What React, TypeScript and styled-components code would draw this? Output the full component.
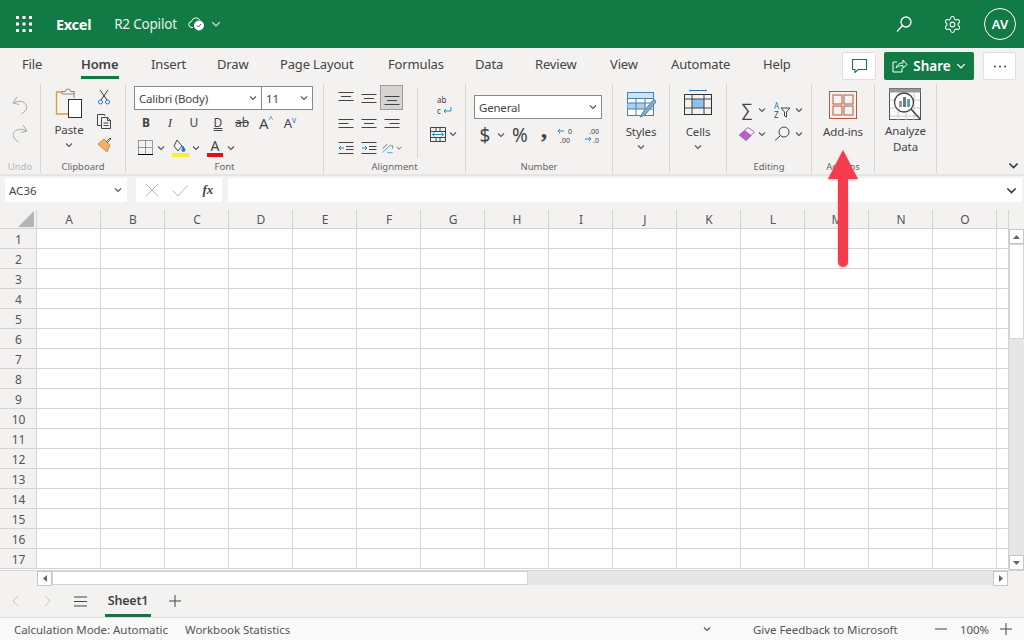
import React from "react";
import styled, { createGlobalStyle } from "styled-components";
import { Settings } from "lucide-react";

const GlobalStyle = createGlobalStyle`
  html, body { margin: 0; padding: 0; background: #fff; }
  * { box-sizing: border-box; }
  body { font-family: "Noto Sans", "Open Sans", sans-serif; color: #333; }
`;

const Page = styled.div`
  position: relative;
  width: 1024px;
  height: 640px;
  overflow: hidden;
  display: flex;
  flex-direction: column;
  background: #f3f2f1;
`;

/* top green bar */
const TopBar = styled.header`
  height: 48px;
  flex: none;
  background: #117a45;
  color: #fff;
  display: flex;
  align-items: center;
  padding: 0 8px 0 16px;
`;
const AppName = styled.span`
  margin-left: 24px;
  font-size: 14.5px;
  font-weight: 700;
  letter-spacing: -0.3px;
`;
const DocName = styled.span`
  margin-left: 23px;
  font-size: 13.5px;
  letter-spacing: -0.2px;
  color: #e6f2ec;
`;
const TopRight = styled.div`
  margin-left: auto;
  display: flex;
  align-items: center;
`;
const TopIcon = styled.div<{ $mr: number; $ml?: number }>`
  display: flex;
  margin-left: ${(p) => p.$ml ?? 0}px;
  margin-right: ${(p) => p.$mr}px;
`;
const Avatar = styled.div`
  width: 32px;
  height: 32px;
  border: 1px solid #fff;
  border-radius: 50%;
  display: flex;
  align-items: center;
  justify-content: center;
  font-size: 13px;
  font-weight: 600;
`;

/* tabs */
const TabRow = styled.nav`
  height: 32px;
  flex: none;
  display: flex;
  align-items: center;
  padding-left: 22px;
`;
const Tab = styled.div<{ $w: number; $active?: boolean }>`
  position: relative;
  width: ${(p) => p.$w}px;
  height: 32px;
  line-height: 32px;
  font-size: 13px;
  white-space: nowrap;
  letter-spacing: -0.15px;
  color: #444;
  font-weight: ${(p) => (p.$active ? 600 : 400)};
  &::after {
    content: "";
    display: ${(p) => (p.$active ? "block" : "none")};
    position: absolute;
    left: 0;
    width: 38px;
    bottom: 1px;
    height: 3px;
    background: #117a45;
  }
`;
const TabActions = styled.div`
  margin-left: auto;
  padding-right: 8px;
  display: flex;
  align-items: center;
  gap: 8px;
  margin-top: 4px;
`;
const WhiteButton = styled.div<{ $w: number }>`
  width: ${(p) => p.$w}px;
  height: 28px;
  background: #fff;
  border: 1px solid #e1dfdd;
  border-radius: 2px;
  display: flex;
  align-items: center;
  justify-content: center;
`;
const ShareButton = styled.div`
  width: 90px;
  height: 28px;
  margin-right: 1px;
  background: #117a45;
  border-radius: 2px;
  color: #fff;
  font-size: 13.5px;
  font-weight: 600;
  display: flex;
  align-items: center;
  justify-content: center;
  gap: 5px;
`;

/* ribbon */
const Ribbon = styled.section`
  height: 96px;
  flex: none;
  display: flex;
  padding: 4px 0 1px;
  border-bottom: 2px solid #e6e5e4;
`;
const Group = styled.div<{ $w: number }>`
  width: ${(p) => p.$w}px;
  flex: none;
  display: flex;
  flex-direction: column;
  border-right: 1px solid #d8d6d4;
`;
const GroupBody = styled.div<{ $pad?: number }>`
  flex: 1;
  min-height: 0;
  display: flex;
  padding-left: ${(p) => p.$pad ?? 0}px;
`;
const GroupLabel = styled.div<{ $muted?: boolean }>`
  height: 12px;
  line-height: 12px;
  text-align: center;
  font-size: 9.5px;
  color: ${(p) => (p.$muted ? "#b5b5b5" : "#666")};
`;
const Stack = styled.div<{ $w?: number; $gap?: number; $top?: number }>`
  display: flex;
  flex-direction: column;
  align-items: center;
  width: ${(p) => (p.$w ? `${p.$w}px` : "auto")};
  gap: ${(p) => p.$gap ?? 0}px;
  padding-top: ${(p) => p.$top ?? 0}px;
  & > * {
    flex: none;
  }
`;
const BigLabel = styled.div<{ $mt?: number }>`
  margin-top: ${(p) => p.$mt ?? 0}px;
  font-size: 11.5px;
  line-height: 16px;
  color: #444;
  text-align: center;
  letter-spacing: -0.1px;
`;
const ChevSlot = styled.div`
  display: flex;
  margin-top: 3px;
`;
const Row = styled.div<{ $h?: number; $mt?: number }>`
  display: flex;
  align-items: center;
  align-self: flex-start;
  height: ${(p) => p.$h ?? 24}px;
  margin-top: ${(p) => p.$mt ?? 0}px;
`;
const CenterRow = styled(Row)`
  align-self: center;
`;
const Cell = styled.div<{ $w: number; $ml?: number; $column?: boolean }>`
  width: ${(p) => p.$w}px;
  margin-left: ${(p) => p.$ml ?? 0}px;
  height: 100%;
  display: flex;
  flex-direction: ${(p) => (p.$column ? "column" : "row")};
  align-items: center;
  justify-content: center;
  color: #333;
`;
const Glyph = styled.span<{
  $size?: number;
  $bold?: boolean;
  $italic?: boolean;
  $under?: "single" | "double";
  $strike?: boolean;
  $serif?: boolean;
  $lift?: number;
  $blue?: boolean;
  $tight?: boolean;
}>`
  font-size: ${(p) => p.$size ?? 12}px;
  font-weight: ${(p) => (p.$bold ? 700 : 400)};
  font-style: ${(p) => (p.$italic ? "italic" : "normal")};
  font-family: ${(p) => (p.$serif ? '"Liberation Serif", serif' : "inherit")};
  text-decoration: ${(p) => (p.$under ? `underline ${p.$under}` : p.$strike ? "line-through" : "none")};
  margin-bottom: ${(p) => p.$lift ?? 0}px;
  line-height: ${(p) => (p.$tight ? "14px" : "normal")};
  color: ${(p) => (p.$blue ? "#2a78b8" : "#444")};
`;
const Combo = styled.div<{ $w: number }>`
  width: ${(p) => p.$w}px;
  height: 24px;
  align-self: flex-start;
  background: #fff;
  border: 1px solid #8a8886;
  display: flex;
  align-items: center;
  font-size: 11.5px;
  letter-spacing: -0.2px;
  color: #444;
`;
const ComboPart = styled.div<{ $w: number; $divide?: boolean }>`
  width: ${(p) => p.$w}px;
  height: 100%;
  display: flex;
  align-items: center;
  justify-content: space-between;
  padding: 0 4px 0 4px;
  border-right: ${(p) => (p.$divide ? "1px solid #8a8886" : "none")};
`;
const AlignGrid = styled.div`
  display: grid;
  grid-template-columns: repeat(3, 23px);
  grid-auto-rows: 25px;
  margin-top: 1px;
  height: 75px;
`;
const AlignCell = styled.div<{ $on?: boolean }>`
  display: flex;
  align-items: center;
  justify-content: center;
  background: ${(p) => (p.$on ? "#d6d5d4" : "transparent")};
  border: 1px solid ${(p) => (p.$on ? "#9c9b9a" : "transparent")};
`;
const InnerRule = styled.div`
  width: 1px;
  height: 70px;
  margin: 4px 7px 0 14px;
  background: #d8d6d4;
`;
const RibbonEnd = styled.div`
  flex: 1;
  display: flex;
  align-items: flex-end;
  justify-content: flex-end;
  padding: 0 5px 2px 0;
`;

/* formula bar */
const FormulaBar = styled.div`
  height: 34px;
  flex: none;
  display: flex;
  padding: 2px 2px 8px 5px;
`;
const NameBox = styled.div`
  width: 122px;
  background: #fff;
  display: flex;
  align-items: center;
  justify-content: space-between;
  padding: 0 5px 0 4px;
  font-size: 11.5px;
  color: #444;
`;
const FxBox = styled.div`
  width: 86px;
  margin-left: 9px;
  background: #fff;
  display: flex;
  align-items: center;
  justify-content: space-around;
  padding: 0 2px;
`;
const FormulaInput = styled.div`
  flex: 1;
  margin-left: 6px;
  background: #fff;
  display: flex;
  align-items: center;
  justify-content: flex-end;
  padding-right: 5px;
`;

/* sheet */
const SheetArea = styled.div`
  height: 360px;
  flex: none;
  display: flex;
`;
const SheetGrid = styled.div`
  width: 1009px;
  flex: none;
  display: grid;
  grid-template-columns: 37px repeat(15, 64px) 12px;
  grid-template-rows: 19px repeat(17, 20px);
  background: #fff;
`;
const HeadCell = styled.div`
  background: #f3f2f1;
  border-right: 1px solid #d4d4d4;
  border-bottom: 1px solid #d4d4d4;
  display: flex;
  align-items: center;
  justify-content: center;
  padding: 1px 0 0 1px;
  font-size: 12px;
  color: #555;
`;
const Corner = styled(HeadCell)`
  justify-content: flex-end;
  align-items: flex-end;
  padding: 0 2px 1px 0;
`;
const DataCell = styled.div`
  border-right: 1px solid #d4d4d4;
  border-bottom: 1px solid #d4d4d4;
`;
const VScroll = styled.div`
  width: 15px;
  flex: none;
  display: flex;
  flex-direction: column;
  padding-top: 19px;
  background: #e6e6e6;
  box-shadow: inset 0 19px 0 #f3f2f1;
`;
const ScrollButton = styled.div`
  width: 15px;
  height: 15px;
  flex: none;
  background: #fff;
  border: 1px solid #c8c6c4;
  display: flex;
  align-items: center;
  justify-content: center;
`;
const VThumb = styled.div`
  height: 95px;
  flex: none;
  background: #fff;
  border: 1px solid #d4d4d4;
`;
const ScrollGap = styled.div`
  flex: 1;
`;
const HScrollRow = styled.div`
  height: 15px;
  flex: none;
  display: flex;
  padding-left: 37px;
  border-top: 1px solid #d4d4d4;
`;
const HTrack = styled.div`
  width: 941px;
  flex: none;
  background: #e6e6e6;
`;
const HThumb = styled.div`
  width: 476px;
  height: 100%;
  background: #fff;
  border: 1px solid #d4d4d4;
`;
const SheetBar = styled.div`
  height: 32px;
  flex: none;
  display: flex;
  align-items: center;
  font-size: 13px;
`;
const SheetTab = styled.div`
  position: relative;
  width: 46px;
  margin-left: 18px;
  height: 32px;
  line-height: 31px;
  text-align: center;
  font-weight: 600;
  font-size: 12.5px;
  letter-spacing: -0.2px;
  color: #444;
  white-space: nowrap;
  &::after {
    content: "";
    position: absolute;
    left: 0;
    right: 0;
    bottom: 0;
    height: 3px;
    background: #1f6e43;
  }
`;
const SheetIcon = styled.div<{ $w: number; $ml?: number }>`
  width: ${(p) => p.$w}px;
  margin-left: ${(p) => p.$ml ?? 0}px;
  display: flex;
  justify-content: center;
`;
const StatusBar = styled.footer`
  height: 23px;
  flex: none;
  background: #f9f9f9;
  border-top: 1px solid #e1dfdd;
  display: flex;
  align-items: center;
  font-size: 11.5px;
  letter-spacing: -0.05px;
  color: #555;
  padding-left: 14px;
`;
const StatusText = styled.span<{ $w: number; $ml?: number }>`
  width: ${(p) => p.$w}px;
  margin-left: ${(p) => p.$ml ?? 0}px;
  flex: none;
  white-space: nowrap;
`;

/* red annotation arrow drawn over the ribbon */
const Annotation = styled.svg`
  position: absolute;
  left: 823px;
  top: 148px;
  filter: drop-shadow(0 1px 1px rgba(0, 0, 0, 0.25));
`;

const Chev = ({ c = "#555", s = 8 }: { c?: string; s?: number }) => (
  <svg width={s} height={s} viewBox="0 0 8 8" fill="none" stroke={c} strokeWidth="1.1">
    <path d="M1 2.5 4 5.5 7 2.5" />
  </svg>
);
const Ico = ({ w, h, children, sw = 1, stroke = "#444" }: { w: number; h: number; children: React.ReactNode; sw?: number; stroke?: string }) => (
  <svg width={w} height={h} viewBox={`0 0 ${w} ${h}`} fill="none" stroke={stroke} strokeWidth={sw}>
    {children}
  </svg>
);
const TextLines = ({ y, align }: { y: "t" | "m" | "b"; align: "l" | "c" | "r" }) => {
  const y0 = y === "t" ? 2 : y === "m" ? 4 : 6;
  return (
    <Ico w={16} h={16}>
      {[0, 4, 8].map((d, i) => {
        const len = i === 1 ? 10 : 15;
        const x = align === "l" ? 0.5 : align === "c" ? (16 - len) / 2 : 15.5 - len;
        return <path key={d} d={`M${x} ${y0 + d + 0.5}h${len}`} />;
      })}
    </Ico>
  );
};
const Indent = ({ out }: { out?: boolean }) => (
  <Ico w={16} h={14}>
    <path d="M0.5 1.5h15M8 5.5h7.5M8 8.5h7.5M0.5 12.5h15" />
    <path d={out ? "M6 7H1M3 5 1 7l2 2" : "M1 7h5M4 5l2 2-2 2"} stroke="#1f8fc0" />
  </Ico>
);

const columns = "ABCDEFGHIJKLMNO".split("");
const rows = Array.from({ length: 17 }, (_, i) => i + 1);
const tabs: [string, number][] = [
  ["File", 59], ["Home", 70], ["Insert", 66], ["Draw", 63], ["Page Layout", 108], ["Formulas", 87],
  ["Data", 60], ["Review", 75], ["View", 61], ["Automate", 92], ["Help", 40],
];

export default function App() {
  return (
    <>
      <GlobalStyle />
      <Page>
        <TopBar>
          <svg width="16" height="16" viewBox="0 0 16 16" fill="#fff">
            {[1.5, 8, 14.5].flatMap((y) => [1.5, 8, 14.5].map((x) => <rect key={`${x}-${y}`} x={x - 1.5} y={y - 1.5} width="3" height="3" />))}
          </svg>
          <AppName>Excel</AppName>
          <DocName>R2 Copilot</DocName>
          <TopIcon $ml={11} $mr={6}>
            <svg width="17" height="14" viewBox="0 0 17 14" fill="none" stroke="#fff" strokeWidth="1">
              <path d="M5 10.5H4a3 3 0 0 1-.5-6A4.5 4.5 0 0 1 12 3.5" />
              <circle cx="11" cy="8.5" r="4.5" fill="#fff" />
              <path d="M9 8.5l1.5 1.5 2.5-3" stroke="#117a45" />
            </svg>
          </TopIcon>
          <Chev c="#cfe5d9" s={10} />
          <TopRight>
            <TopIcon $mr={31}>
              <svg width="16" height="17" viewBox="0 0 16 17" fill="none" stroke="#fff" strokeWidth="1.3">
                <circle cx="10" cy="6" r="5" />
                <path d="M6.5 9.5 1 15.5" />
              </svg>
            </TopIcon>
            <TopIcon $mr={22}>
              <Settings size={19} strokeWidth={1.3} color="#fff" />
            </TopIcon>
            <Avatar>AV</Avatar>
          </TopRight>
        </TopBar>

        <TabRow>
          {tabs.map(([t, w]) => (
            <Tab key={t} $w={w} $active={t === "Home"}>{t}</Tab>
          ))}
          <TabActions>
            <WhiteButton $w={34}>
              <svg width="15" height="14" viewBox="0 0 15 14" fill="none" stroke="#117a45" strokeWidth="1.1">
                <path d="M0.5 0.5h14v10H6l-3 3v-3H0.5z" />
              </svg>
            </WhiteButton>
            <ShareButton>
              <svg width="16" height="14" viewBox="0 0 16 14" fill="none" stroke="#fff" strokeWidth="1">
                <path d="M5 3H1v10h9V9M4 9c1-4 4-5 7-5V1l4 4.5L11 9V6.5C8 6.5 6 7 4 9z" />
              </svg>
              Share
              <Chev c="#fff" s={10} />
            </ShareButton>
            <WhiteButton $w={33}>
              <svg width="14" height="3" viewBox="0 0 14 3" fill="#444">
                <circle cx="2" cy="1.5" r="1" /><circle cx="7" cy="1.5" r="1" /><circle cx="12" cy="1.5" r="1" />
              </svg>
            </WhiteButton>
          </TabActions>
        </TabRow>

        <Ribbon>
          <Group $w={41}>
            <GroupBody>
              <Stack $w={40} $gap={9} $top={12}>
                <Ico w={18} h={19} stroke="#a8a8a8">
                  <path d="M6 1 2 7l6 1.5M2.5 7C7 4 14 5 15.5 9.5 16.5 13 14 15.5 10.5 18" />
                </Ico>
                <Ico w={18} h={19} stroke="#a8a8a8">
                  <path d="M12 1l4 6-6 1.5M15.5 7C11 4 4 5 2.5 9.5 1.5 13 4 15.5 7.5 18" />
                </Ico>
              </Stack>
            </GroupBody>
            <GroupLabel $muted>Undo</GroupLabel>
          </Group>

          <Group $w={85}>
            <GroupBody $pad={13}>
              <Stack $w={30} $top={4}>
                <Ico w={28} h={31}>
                  <path d="M7 4H1.5v22H13" stroke="#d99a4e" strokeWidth="1.4" />
                  <path d="M7 4h12v6" stroke="#d99a4e" strokeWidth="1.4" />
                  <path d="M7 6V3.5h3.5a2.5 2.5 0 0 1 5 0H19V6z" fill="#f3f2f1" stroke="#888" />
                  <rect x="13.5" y="11.5" width="13" height="18" fill="#fff" stroke="#333" />
                </Ico>
                <BigLabel $mt={3}>Paste</BigLabel>
                <ChevSlot><Chev /></ChevSlot>
              </Stack>
              <Stack $w={40} $gap={8} $top={5}>
                <Ico w={14} h={16}>
                  <path d="M3 1l7 10M11 1 4 11" stroke="#333" />
                  <circle cx="3.5" cy="13" r="2" stroke="#2a78b8" />
                  <circle cx="10.5" cy="13" r="2" stroke="#2a78b8" />
                </Ico>
                <Ico w={16} h={16}>
                  <path d="M5 12.5H1.5V1.5h7L9 3" />
                  <path d="M5.5 4.5h6l3 3v8h-9zM11.5 4.5v3h3M7.5 10h5M7.5 12.5h5" fill="#f3f2f1" />
                </Ico>
                <Ico w={16} h={16}>
                  <path d="M8 2 14 8l-3 7-9-8z" fill="#f0b070" stroke="#d98a3c" />
                  <path d="M10 5l4-4 1 1-4 4" stroke="#555" />
                </Ico>
              </Stack>
            </GroupBody>
            <GroupLabel>Clipboard</GroupLabel>
          </Group>

          <Group $w={198}>
            <GroupBody $pad={8}>
              <Stack $top={2}>
                <Combo $w={179}>
                  <ComboPart $w={127} $divide>Calibri (Body) <Chev /></ComboPart>
                  <ComboPart $w={50}>11 <Chev /></ComboPart>
                </Combo>
                <Row $h={23} $mt={1}>
                  <Cell $w={24}><Glyph $bold>B</Glyph></Cell>
                  <Cell $w={24}><Glyph $italic $serif $size={13}>I</Glyph></Cell>
                  <Cell $w={24}><Glyph $under="single">U</Glyph></Cell>
                  <Cell $w={24}><Glyph $under="double">D</Glyph></Cell>
                  <Cell $w={24}><Glyph $strike>ab</Glyph></Cell>
                  <Cell $w={24}><Glyph $size={15}>A</Glyph><Glyph $size={8} $blue $lift={8}>^</Glyph></Cell>
                  <Cell $w={24}><Glyph $size={13}>A</Glyph><Glyph $size={8} $blue $lift={6}>v</Glyph></Cell>
                </Row>
                <Row $h={25} $mt={1}>
                  <Cell $w={22}>
                    <Ico w={15} h={15}>
                      <path d="M.5.5h14M.5.5v14M14.5.5v14M7.5.5v14M.5 7.5h14" strokeDasharray="1 1" />
                      <path d="M0 14.5h15" stroke="#000" />
                    </Ico>
                  </Cell>
                  <Cell $w={10}><Chev /></Cell>
                  <Cell $w={22} $ml={3}>
                    <Ico w={17} h={18}>
                      <path d="M5 1l5 6-4 5-4-5z" />
                      <path d="M11 7c1 2 2 3 2 4a1.2 1.2 0 0 1-3 0c0-1 .5-2 1-4z" fill="#2a78b8" stroke="#2a78b8" />
                      <rect x="0" y="14" width="17" height="4" fill="#f7ee3b" stroke="none" />
                    </Ico>
                  </Cell>
                  <Cell $w={10}><Chev /></Cell>
                  <Cell $w={22} $ml={3} $column>
                    <Glyph $size={14} $tight>A</Glyph>
                    <svg width="16" height="4" viewBox="0 0 16 4"><rect width="16" height="4" fill="#e0101a" /></svg>
                  </Cell>
                  <Cell $w={10}><Chev /></Cell>
                </Row>
              </Stack>
            </GroupBody>
            <GroupLabel>Font</GroupLabel>
          </Group>

          <Group $w={142}>
            <GroupBody $pad={10}>
              <AlignGrid>
                <AlignCell><TextLines y="t" align="c" /></AlignCell>
                <AlignCell><TextLines y="m" align="c" /></AlignCell>
                <AlignCell $on><TextLines y="b" align="c" /></AlignCell>
                <AlignCell><TextLines y="m" align="l" /></AlignCell>
                <AlignCell><TextLines y="m" align="c" /></AlignCell>
                <AlignCell><TextLines y="m" align="r" /></AlignCell>
                <AlignCell><Indent out /></AlignCell>
                <AlignCell><Indent /></AlignCell>
                <AlignCell>
                  <Ico w={19} h={16}>
                    <path d="M2 14 11 5M8 14h7M15 5l-4 0M15 5v4" stroke="#1f8fc0" />
                    <path d="M2 9 8 3" />
                  </Ico>
                  <Chev />
                </AlignCell>
              </AlignGrid>
              <InnerRule />
              <Stack $w={38} $gap={9} $top={9}>
                <Ico w={18} h={24}>
                  <text x="2" y="10" fontSize="8" fill="#444" stroke="none">ab</text>
                  <text x="2" y="21" fontSize="8" fill="#444" stroke="none">c</text>
                  <path d="M16 14v4H9M11 16l-2 2 2 2" stroke="#1f8fc0" />
                </Ico>
                <CenterRow $h={16}>
                  <Ico w={16} h={15}>
                    <path d="M.5.5h15v14H.5zM.5 4.5h15M.5 10.5h15M6 .5v4M10 .5v4M6 10.5v4M10 10.5v4" />
                    <path d="M2.5 7.5h11M4.5 5.5l-2 2 2 2M11.5 5.5l2 2-2 2" stroke="#1f8fc0" />
                  </Ico>
                  <Cell $w={11} $ml={2}><Chev /></Cell>
                </CenterRow>
              </Stack>
            </GroupBody>
            <GroupLabel>Alignment</GroupLabel>
          </Group>

          <Group $w={147}>
            <GroupBody $pad={8}>
              <Stack $top={11}>
                <Combo $w={128}>
                  <ComboPart $w={126}>General <Chev /></ComboPart>
                </Combo>
                <Row $h={32}>
                  <Cell $w={22}><Glyph $size={19}>$</Glyph></Cell>
                  <Cell $w={10}><Chev /></Cell>
                  <Cell $w={26} $ml={1}><Glyph $size={19}>%</Glyph></Cell>
                  <Cell $w={22}><Glyph $size={26} $bold $serif $tight $lift={11}>,</Glyph></Cell>
                  <Cell $w={24}>
                    <Ico w={20} h={18}>
                      <path d="M7 5H1M3 3 1 5l2 2" stroke="#1f8fc0" />
                      <text x="11" y="8" fontSize="7" fill="#444" stroke="none">0</text>
                      <text x="3" y="17" fontSize="7" fill="#444" stroke="none">.00</text>
                    </Ico>
                  </Cell>
                  <Cell $w={30}>
                    <Ico w={20} h={18}>
                      <text x="5" y="8" fontSize="7" fill="#444" stroke="none">.00</text>
                      <path d="M1 13h6M5 11l2 2-2 2" stroke="#1f8fc0" />
                      <text x="9" y="17" fontSize="7" fill="#444" stroke="none">.0</text>
                    </Ico>
                  </Cell>
                </Row>
              </Stack>
            </GroupBody>
            <GroupLabel>Number</GroupLabel>
          </Group>

          <Group $w={57}>
            <GroupBody>
              <Stack $w={56} $top={8}>
                <Ico w={30} h={27}>
                  <rect x="1.5" y=".5" width="26" height="23" fill="#fff" stroke="#4a7fa8" />
                  <rect x="1.5" y=".5" width="26" height="6" fill="#cfe3f2" stroke="#4a7fa8" />
                  <rect x="1.5" y="11" width="18" height="6" fill="#a9d0ee" stroke="none" />
                  <path d="M1.5 11h26M1.5 17h26M10 6.5v17M19 6.5v17" stroke="#4a7fa8" />
                  <path d="M28 7 17 20l-3 5 5-2L30 10z" fill="#6fb1de" stroke="#77818a" />
                </Ico>
                <BigLabel $mt={5}>Styles</BigLabel>
                <ChevSlot><Chev /></ChevSlot>
              </Stack>
            </GroupBody>
            <GroupLabel />
          </Group>

          <Group $w={57}>
            <GroupBody>
              <Stack $w={56} $top={5}>
                <Ico w={28} h={28}>
                  <path d="M6 1.5h16M6 .5v2M22 .5v2" stroke="#2a78b8" />
                  <rect x="8" y="10" width="12" height="9" fill="#8cc2f0" stroke="none" />
                  <rect x=".5" y="5.5" width="27" height="20" stroke="#333" />
                  <path d="M.5 10h27M.5 19h27M8 5.5v20M20 5.5v20" stroke="#444" />
                </Ico>
                <BigLabel $mt={7}>Cells</BigLabel>
                <ChevSlot><Chev /></ChevSlot>
              </Stack>
            </GroupBody>
            <GroupLabel />
          </Group>

          <Group $w={85}>
            <GroupBody $pad={12}>
              <Stack $top={14} $gap={1}>
                <Row $h={23}>
                  <Cell $w={16}><Glyph $size={17}>∑</Glyph></Cell>
                  <Cell $w={14}><Chev /></Cell>
                  <Cell $w={24} $ml={1}>
                    <Ico w={17} h={18}>
                      <text x="0" y="8" fontSize="8" fill="#2a78b8" stroke="none">A</text>
                      <text x="0" y="17" fontSize="8" fill="#444" stroke="none">Z</text>
                      <path d="M7 7h9l-3.5 4v5l-2-1v-4z" />
                    </Ico>
                  </Cell>
                  <Cell $w={10}><Chev /></Cell>
                </Row>
                <Row $h={23}>
                  <Cell $w={16}>
                    <Ico w={16} h={14} stroke="#b05fc6">
                      <path d="M9 .5 15.5 5 7 13.5 .5 8z" fill="#f3f2f1" />
                      <path d="M5.5 3.5 12 8.5 7 13.5 .5 8z" fill="#b565c9" />
                    </Ico>
                  </Cell>
                  <Cell $w={14}><Chev /></Cell>
                  <Cell $w={24} $ml={1}>
                    <Ico w={16} h={15}>
                      <circle cx="10" cy="6" r="5" />
                      <path d="M6.5 9.5 1 14.5" />
                    </Ico>
                  </Cell>
                  <Cell $w={10}><Chev /></Cell>
                </Row>
              </Stack>
            </GroupBody>
            <GroupLabel>Editing</GroupLabel>
          </Group>

          <Group $w={63}>
            <GroupBody>
              <Stack $w={62} $top={7}>
                <Ico w={28} h={28} stroke="#b4593c">
                  <rect x=".5" y=".5" width="27" height="27" />
                  <rect x="4" y="4" width="9" height="9" />
                  <rect x="15" y="4" width="9" height="9" />
                  <rect x="4" y="15" width="9" height="9" />
                  <rect x="15" y="15" width="9" height="9" />
                </Ico>
                <BigLabel $mt={5}>Add-ins</BigLabel>
              </Stack>
            </GroupBody>
            <GroupLabel>Add-ins</GroupLabel>
          </Group>

          <Group $w={62}>
            <GroupBody>
              <Stack $w={61} $top={4}>
                <Ico w={33} h={33}>
                  <rect x=".5" y=".5" width="31" height="31" fill="#fff" stroke="#555" />
                  <rect x=".5" y=".5" width="31" height="4" fill="#999" stroke="none" />
                  <path d="M1 12h30M1 20h30M1 28h30M9 4v28M17 4v28M25 4v28" stroke="#c8c8c8" />
                  <circle cx="15" cy="14.5" r="9.5" fill="#fff" stroke="#444" strokeWidth="1.3" />
                  <rect x="10" y="13" width="3" height="6" fill="#999" stroke="none" />
                  <rect x="14" y="9" width="3" height="10" fill="#777" stroke="none" />
                  <rect x="18" y="11" width="3" height="8" fill="#5a9bd8" stroke="none" />
                  <path d="M22 21 31 31" strokeWidth="1.5" />
                </Ico>
                <BigLabel $mt={2}>Analyze<br />Data</BigLabel>
              </Stack>
            </GroupBody>
          </Group>

          <RibbonEnd><Chev c="#333" s={11} /></RibbonEnd>
        </Ribbon>

        <FormulaBar>
          <NameBox>AC36 <Chev /></NameBox>
          <FxBox>
            <Ico w={14} h={14} stroke="#b8b8b8"><path d="M1 1l12 12M13 1 1 13" /></Ico>
            <Ico w={17} h={13} stroke="#b8b8b8"><path d="M1 7l5 5L16 1" /></Ico>
            <Glyph $serif $italic $bold $size={13}>fx</Glyph>
          </FxBox>
          <FormulaInput><Chev c="#333" s={11} /></FormulaInput>
        </FormulaBar>

        <SheetArea>
          <SheetGrid>
            <Corner>
              <svg width="16" height="16" viewBox="0 0 16 16"><path d="M16 0v16H0z" fill="#b4b4b4" /></svg>
            </Corner>
            {columns.map((c) => <HeadCell key={c}>{c}</HeadCell>)}
            <HeadCell />
            {rows.map((r) => (
              <React.Fragment key={r}>
                <HeadCell>{r}</HeadCell>
                {columns.map((c) => <DataCell key={c} />)}
                <DataCell />
              </React.Fragment>
            ))}
          </SheetGrid>
          <VScroll>
            <ScrollButton>
              <svg width="7" height="4" viewBox="0 0 7 4"><path d="M3.5 0 7 4H0z" fill="#666" /></svg>
            </ScrollButton>
            <VThumb />
            <ScrollGap />
            <ScrollButton>
              <svg width="7" height="4" viewBox="0 0 7 4"><path d="M0 0h7L3.5 4z" fill="#666" /></svg>
            </ScrollButton>
          </VScroll>
        </SheetArea>

        <HScrollRow>
          <ScrollButton>
            <svg width="4" height="7" viewBox="0 0 4 7"><path d="M4 0v7L0 3.5z" fill="#666" /></svg>
          </ScrollButton>
          <HTrack><HThumb /></HTrack>
          <ScrollButton>
            <svg width="4" height="7" viewBox="0 0 4 7"><path d="M0 0v7l4-3.5z" fill="#666" /></svg>
          </ScrollButton>
        </HScrollRow>

        <SheetBar>
          <SheetIcon $w={14} $ml={8}>
            <Ico w={8} h={12} stroke="#c4c4c4"><path d="M7 1 2 6l5 5" /></Ico>
          </SheetIcon>
          <SheetIcon $w={14} $ml={19}>
            <Ico w={8} h={12} stroke="#c4c4c4"><path d="M1 1l5 5-5 5" /></Ico>
          </SheetIcon>
          <SheetIcon $w={14} $ml={18}>
            <Ico w={13} h={11}><path d="M0 1h13M0 5.5h13M0 10h13" /></Ico>
          </SheetIcon>
          <SheetTab>Sheet1</SheetTab>
          <SheetIcon $w={14} $ml={17}>
            <Ico w={12} h={12}><path d="M6 0v12M0 6h12" /></Ico>
          </SheetIcon>
        </SheetBar>

        <StatusBar>
          <StatusText $w={171}>Calculation Mode: Automatic</StatusText>
          <StatusText $w={518}>Workbook Statistics</StatusText>
          <Chev />
          <StatusText $w={182} $ml={42}>Give Feedback to Microsoft</StatusText>
          <Ico w={12} h={12}><path d="M0 6h12" /></Ico>
          <StatusText $w={40} $ml={13}>100%</StatusText>
          <Ico w={12} h={12}><path d="M6 0v12M0 6h12" /></Ico>
        </StatusBar>

        <Annotation width="40" height="122" viewBox="0 0 40 122">
          <path d="M20 2 35 31H25V114a5 5 0 0 1-10 0V31H5z" fill="#f53b4c" />
        </Annotation>
      </Page>
    </>
  );
}
